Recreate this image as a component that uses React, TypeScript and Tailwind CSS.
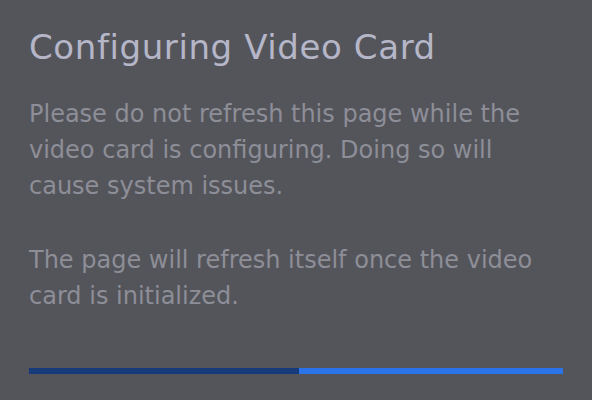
export default function App() {
  return (
    <div
      className="w-[592px] h-[400px] bg-[#54555b] px-[29px] pt-[24px] flex flex-col"
      style={{ fontFamily: '"DejaVu Sans", "Open Sans", sans-serif' }}
    >
      <h1 className="text-[34px] leading-[46px] tracking-[0.6px] text-[#b5b6c8]">Configuring Video Card</h1>
      <div className="mt-[26px] text-[24px] leading-[36px] text-[#8d8e97]">
        <p>
          Please do not refresh this page while the video card is configuring. Doing so will cause system
          issues.
        </p>
        <p className="mt-[38px]">The page will refresh itself once the video card is initialized.</p>
      </div>
      <div className="mt-[54px] flex h-[6px] w-[534px]">
        <div className="w-[270px] bg-[#163a7a]" />
        <div className="flex-1 bg-[#2a73e8]" />
      </div>
    </div>
  );
}
